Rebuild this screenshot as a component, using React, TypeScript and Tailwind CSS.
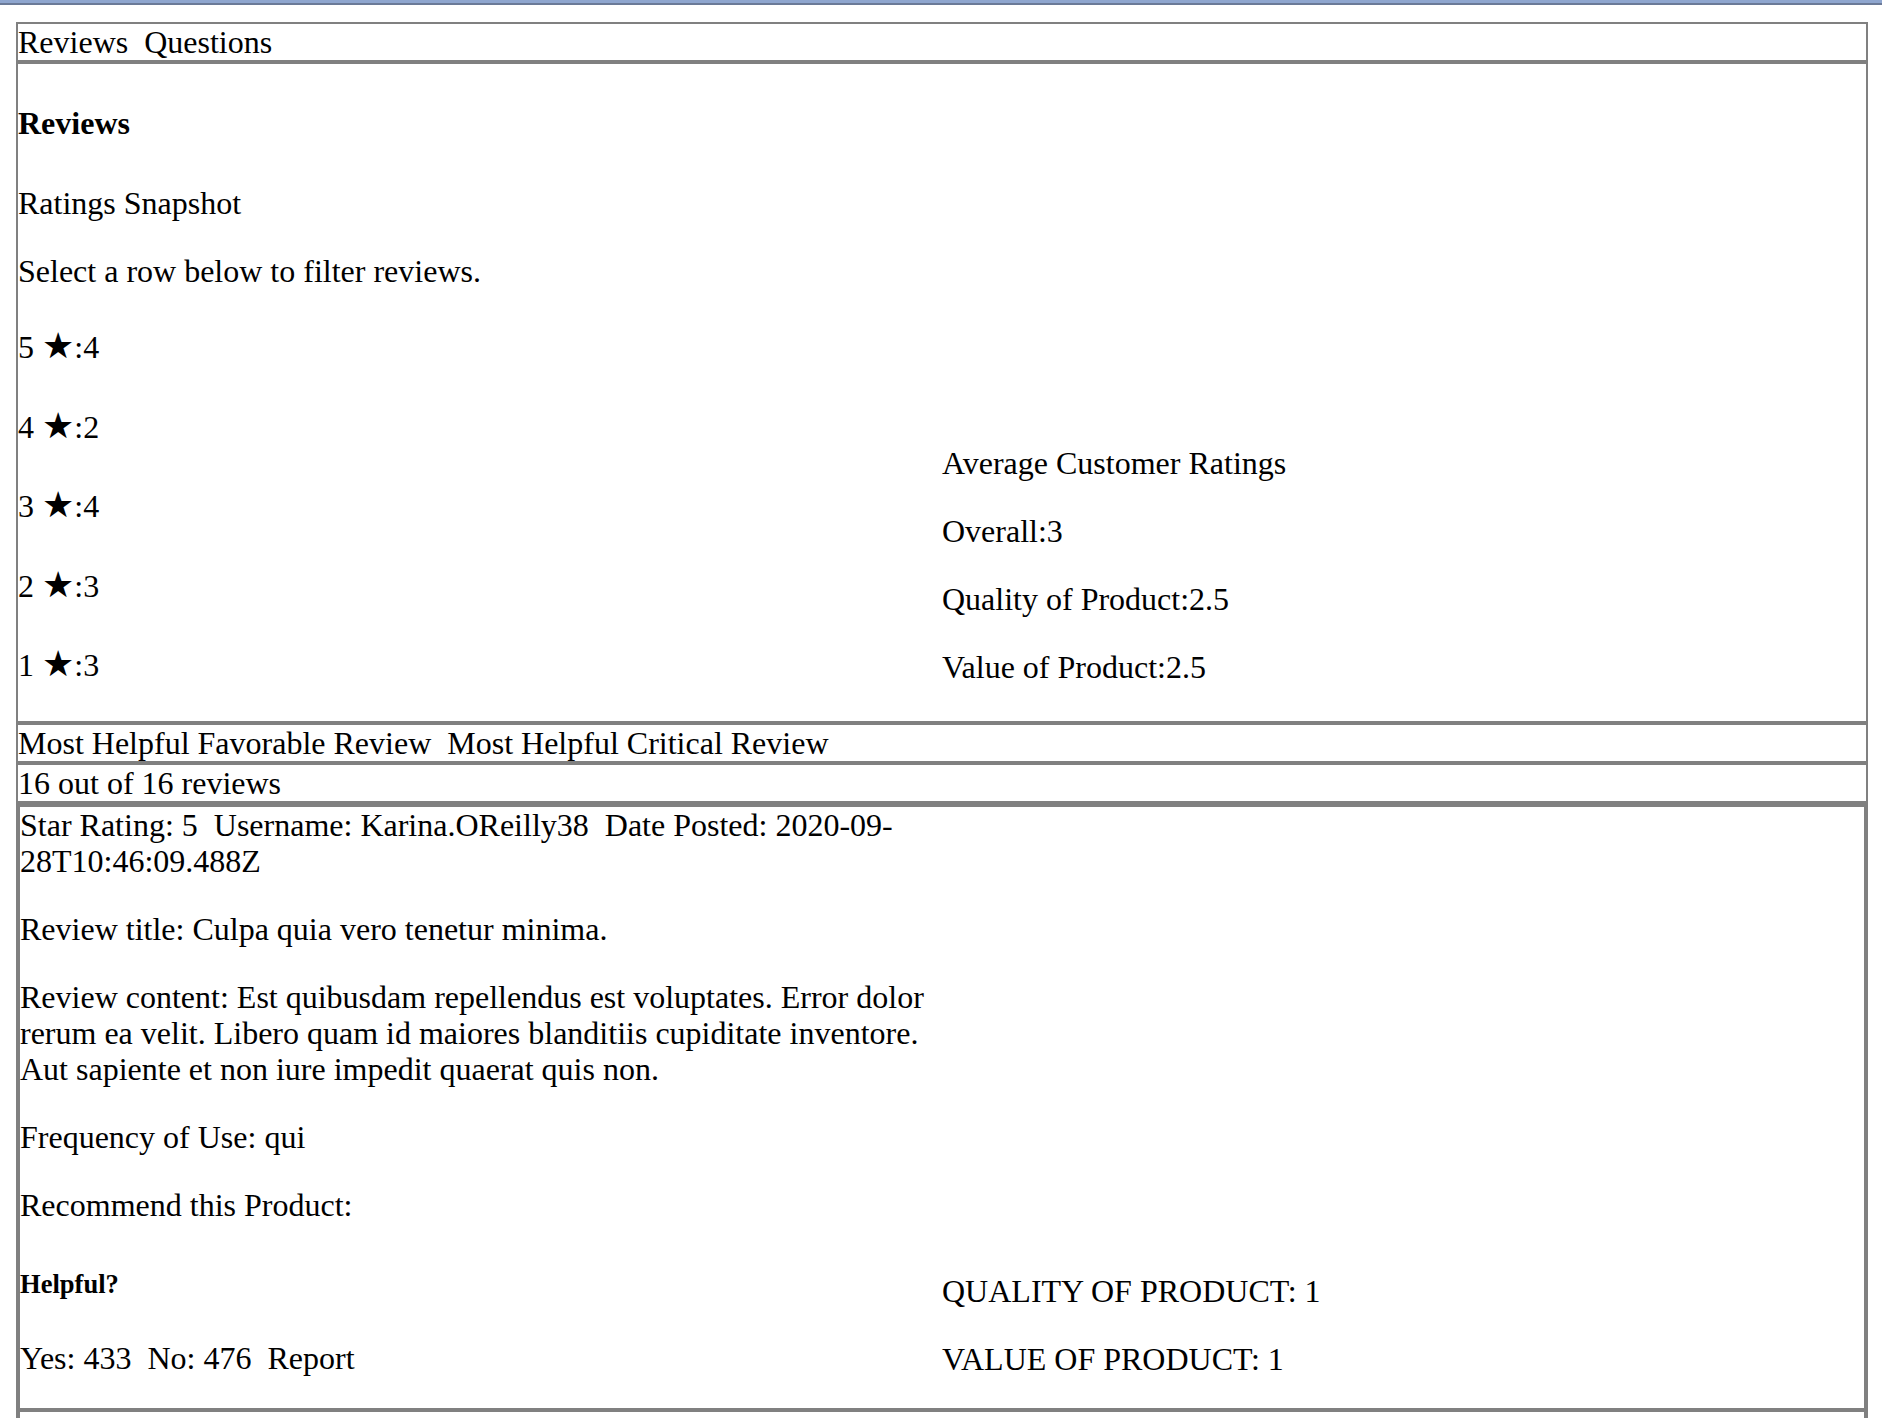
import React from 'react';

const box = 'border-2 border-[#808080]';

const ratingRows = [
  { stars: 5, count: 4 },
  { stars: 4, count: 2 },
  { stars: 3, count: 4 },
  { stars: 2, count: 3 },
  { stars: 1, count: 3 },
];

const reviews = [
  {
    rating: 5,
    username: 'Karina.OReilly38',
    date: '2020-09-28T10:46:09.488Z',
    title: 'Culpa quia vero tenetur minima.',
    content:
      'Est quibusdam repellendus est voluptates. Error dolor rerum ea velit. Libero quam id maiores blanditiis cupiditate inventore. Aut sapiente et non iure impedit quaerat quis non.',
    frequency: 'qui',
    yes: 433,
    no: 476,
    quality: 1,
    value: 1,
  },
  {
    rating: 3,
    username: 'Edwin_Hartmann',
    date: '2020-07-14T03:12:51.102Z',
    title: 'Voluptatem aut dolores.',
    content: 'Nihil quia sed ut eos. Sint molestiae eum tempora.',
    frequency: 'ut',
    yes: 120,
    no: 88,
    quality: 3,
    value: 2,
  },
];

function ReviewItem({ r }: { r: (typeof reviews)[number] }) {
  return (
    <div className={`${box} flex items-end`}>
      <div className="w-1/2">
        <div>
          <span className="mr-4">Star Rating: {r.rating}</span>
          <span className="mr-4">Username: {r.username}</span>
          <span>Date Posted: {r.date}</span>
        </div>
        <p className="my-8">Review title: {r.title}</p>
        <p className="my-8">Review content: {r.content}</p>
        <p className="my-8">Frequency of Use: {r.frequency}</p>
        <p className="my-8">Recommend this Product:</p>
        <h5 className="mt-[45.6px] mb-[41.1px] text-[26.56px] font-bold leading-[30.5px]">Helpful?</h5>
        <p className="my-8">
          <span className="mr-4">Yes: {r.yes}</span>
          <span className="mr-4">No: {r.no}</span>
          <span>Report</span>
        </p>
      </div>
      <div className="mb-[-1px] w-1/2">
        <p className="my-8">QUALITY OF PRODUCT: {r.quality}</p>
        <p className="my-8">VALUE OF PRODUCT: {r.value}</p>
      </div>
    </div>
  );
}

export default function App() {
  return (
    <div className="min-h-screen bg-white font-['Liberation_Serif',serif] text-[32px] leading-[36px] text-black">
      <div className="h-[5px] border-b-2 border-[#6b7a98] bg-[#8fa6cf]" />

      <div className="ml-4 mr-[14px] mt-[17px]">
        <div className={`${box} flex gap-4`}>
          <span>Reviews</span>
          <span>Questions</span>
        </div>

        <div className={`${box} flex items-end pb-[2.4px]`}>
          <div className="w-1/2">
            <h4 className="mt-[41.3px] mb-[44px] font-bold">Reviews</h4>
            <p className="my-8">Ratings Snapshot</p>
            <p className="my-8">Select a row below to filter reviews.</p>
            {ratingRows.map((row) => (
              <p key={row.stars} className="my-8 h-[47.5px] pt-[8px]">
                {row.stars}{' '}
                <span className="font-['DejaVu_Sans',sans-serif] text-[36px] leading-[0]">★</span>:{row.count}
              </p>
            ))}
          </div>
          <div className="mb-[1.4px] w-1/2">
            <p className="my-8">Average Customer Ratings</p>
            <p className="my-8">Overall:3</p>
            <p className="my-8">Quality of Product:2.5</p>
            <p className="my-8">Value of Product:2.5</p>
          </div>
        </div>

        <div className={`${box} flex gap-4`}>
          <span>Most Helpful Favorable Review</span>
          <span>Most Helpful Critical Review</span>
        </div>

        <div className={box}>16 out of 16 reviews</div>

        <div className={box}>
          {reviews.map((r) => (
            <ReviewItem key={r.username} r={r} />
          ))}
        </div>
      </div>
    </div>
  );
}
